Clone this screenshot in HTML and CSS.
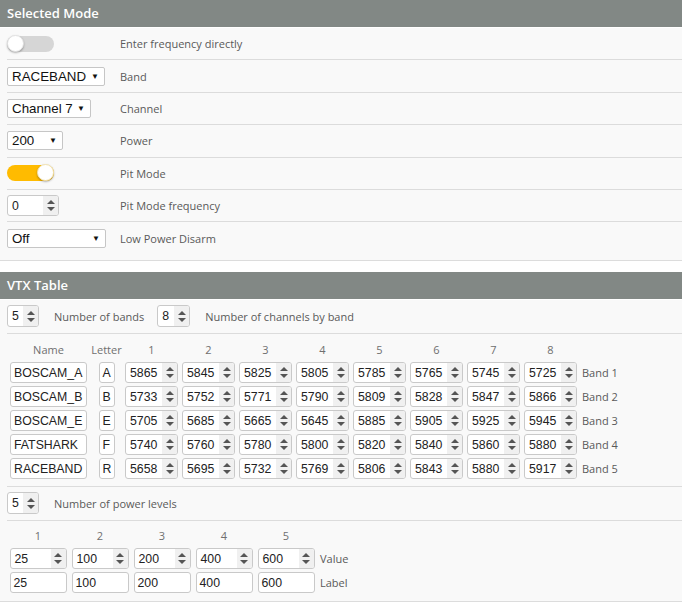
FILE: index.html
```html
<!DOCTYPE html>
<html>
<head>
<meta charset="utf-8">
<link rel="stylesheet" href="styles.css">
</head>
<body>
<div class="box">
  <div class="title">Selected Mode</div>
  <div class="content">
    <div class="row">
      <div class="ctl"><span class="switch"><span class="knob"></span></span></div>
      <span class="lbl">Enter frequency directly</span>
    </div>
    <div class="row">
      <div class="ctl"><span class="sel w98"><span>RACEBAND</span><span class="arr">▼</span></span></div>
      <span class="lbl">Band</span>
    </div>
    <div class="row">
      <div class="ctl"><span class="sel w84"><span>Channel 7</span><span class="arr">▼</span></span></div>
      <span class="lbl">Channel</span>
    </div>
    <div class="row">
      <div class="ctl"><span class="sel w56"><span>200</span><span class="arr">▼</span></span></div>
      <span class="lbl">Power</span>
    </div>
    <div class="row">
      <div class="ctl"><span class="switch on"><span class="knob"></span></span></div>
      <span class="lbl">Pit Mode</span>
    </div>
    <div class="row">
      <div class="ctl"><span class="num w52"><span class="v">0</span><span class="sp"><i class="up"></i><i class="dn"></i></span></span></div>
      <span class="lbl">Pit Mode frequency</span>
    </div>
    <div class="row last">
      <div class="ctl"><span class="sel w99"><span>Off</span><span class="arr">▼</span></span></div>
      <span class="lbl">Low Power Disarm</span>
    </div>
  </div>
</div>

<div class="box second">
  <div class="title">VTX Table</div>
  <div class="content">
    <div class="line">
      <span class="num w32"><span class="v">5</span><span class="sp"><i class="up"></i><i class="dn"></i></span></span>
      <span class="lbl tight">Number of bands</span>
      <span class="num w33"><span class="v">8</span><span class="sp"><i class="up"></i><i class="dn"></i></span></span>
      <span class="lbl">Number of channels by band</span>
    </div>
    <div class="vtx">
      <span class="hd">Name</span><span class="hd">Letter</span>
      <span class="hd">1</span><span class="hd">2</span><span class="hd">3</span><span class="hd">4</span><span class="hd">5</span><span class="hd">6</span><span class="hd">7</span><span class="hd">8</span><span></span>

      <span class="txt wname">BOSCAM_A</span><span class="txt wlet">A</span>
      <span class="num wf"><span class="v">5865</span><span class="sp"><i class="up"></i><i class="dn"></i></span></span>
      <span class="num wf"><span class="v">5845</span><span class="sp"><i class="up"></i><i class="dn"></i></span></span>
      <span class="num wf"><span class="v">5825</span><span class="sp"><i class="up"></i><i class="dn"></i></span></span>
      <span class="num wf"><span class="v">5805</span><span class="sp"><i class="up"></i><i class="dn"></i></span></span>
      <span class="num wf"><span class="v">5785</span><span class="sp"><i class="up"></i><i class="dn"></i></span></span>
      <span class="num wf"><span class="v">5765</span><span class="sp"><i class="up"></i><i class="dn"></i></span></span>
      <span class="num wf"><span class="v">5745</span><span class="sp"><i class="up"></i><i class="dn"></i></span></span>
      <span class="num wf"><span class="v">5725</span><span class="sp"><i class="up"></i><i class="dn"></i></span></span>
      <span class="band">Band 1</span>

      <span class="txt wname">BOSCAM_B</span><span class="txt wlet">B</span>
      <span class="num wf"><span class="v">5733</span><span class="sp"><i class="up"></i><i class="dn"></i></span></span>
      <span class="num wf"><span class="v">5752</span><span class="sp"><i class="up"></i><i class="dn"></i></span></span>
      <span class="num wf"><span class="v">5771</span><span class="sp"><i class="up"></i><i class="dn"></i></span></span>
      <span class="num wf"><span class="v">5790</span><span class="sp"><i class="up"></i><i class="dn"></i></span></span>
      <span class="num wf"><span class="v">5809</span><span class="sp"><i class="up"></i><i class="dn"></i></span></span>
      <span class="num wf"><span class="v">5828</span><span class="sp"><i class="up"></i><i class="dn"></i></span></span>
      <span class="num wf"><span class="v">5847</span><span class="sp"><i class="up"></i><i class="dn"></i></span></span>
      <span class="num wf"><span class="v">5866</span><span class="sp"><i class="up"></i><i class="dn"></i></span></span>
      <span class="band">Band 2</span>

      <span class="txt wname">BOSCAM_E</span><span class="txt wlet">E</span>
      <span class="num wf"><span class="v">5705</span><span class="sp"><i class="up"></i><i class="dn"></i></span></span>
      <span class="num wf"><span class="v">5685</span><span class="sp"><i class="up"></i><i class="dn"></i></span></span>
      <span class="num wf"><span class="v">5665</span><span class="sp"><i class="up"></i><i class="dn"></i></span></span>
      <span class="num wf"><span class="v">5645</span><span class="sp"><i class="up"></i><i class="dn"></i></span></span>
      <span class="num wf"><span class="v">5885</span><span class="sp"><i class="up"></i><i class="dn"></i></span></span>
      <span class="num wf"><span class="v">5905</span><span class="sp"><i class="up"></i><i class="dn"></i></span></span>
      <span class="num wf"><span class="v">5925</span><span class="sp"><i class="up"></i><i class="dn"></i></span></span>
      <span class="num wf"><span class="v">5945</span><span class="sp"><i class="up"></i><i class="dn"></i></span></span>
      <span class="band">Band 3</span>

      <span class="txt wname">FATSHARK</span><span class="txt wlet">F</span>
      <span class="num wf"><span class="v">5740</span><span class="sp"><i class="up"></i><i class="dn"></i></span></span>
      <span class="num wf"><span class="v">5760</span><span class="sp"><i class="up"></i><i class="dn"></i></span></span>
      <span class="num wf"><span class="v">5780</span><span class="sp"><i class="up"></i><i class="dn"></i></span></span>
      <span class="num wf"><span class="v">5800</span><span class="sp"><i class="up"></i><i class="dn"></i></span></span>
      <span class="num wf"><span class="v">5820</span><span class="sp"><i class="up"></i><i class="dn"></i></span></span>
      <span class="num wf"><span class="v">5840</span><span class="sp"><i class="up"></i><i class="dn"></i></span></span>
      <span class="num wf"><span class="v">5860</span><span class="sp"><i class="up"></i><i class="dn"></i></span></span>
      <span class="num wf"><span class="v">5880</span><span class="sp"><i class="up"></i><i class="dn"></i></span></span>
      <span class="band">Band 4</span>

      <span class="txt wname">RACEBAND</span><span class="txt wlet">R</span>
      <span class="num wf"><span class="v">5658</span><span class="sp"><i class="up"></i><i class="dn"></i></span></span>
      <span class="num wf"><span class="v">5695</span><span class="sp"><i class="up"></i><i class="dn"></i></span></span>
      <span class="num wf"><span class="v">5732</span><span class="sp"><i class="up"></i><i class="dn"></i></span></span>
      <span class="num wf"><span class="v">5769</span><span class="sp"><i class="up"></i><i class="dn"></i></span></span>
      <span class="num wf"><span class="v">5806</span><span class="sp"><i class="up"></i><i class="dn"></i></span></span>
      <span class="num wf"><span class="v">5843</span><span class="sp"><i class="up"></i><i class="dn"></i></span></span>
      <span class="num wf"><span class="v">5880</span><span class="sp"><i class="up"></i><i class="dn"></i></span></span>
      <span class="num wf"><span class="v">5917</span><span class="sp"><i class="up"></i><i class="dn"></i></span></span>
      <span class="band">Band 5</span>
    </div>
    <div class="line">
      <span class="num w32"><span class="v">5</span><span class="sp"><i class="up"></i><i class="dn"></i></span></span>
      <span class="lbl">Number of power levels</span>
    </div>
    <div class="pwr">
      <span class="hd">1</span><span class="hd">2</span><span class="hd">3</span><span class="hd">4</span><span class="hd">5</span><span></span>

      <span class="num wp"><span class="v">25</span><span class="sp"><i class="up"></i><i class="dn"></i></span></span>
      <span class="num wp"><span class="v">100</span><span class="sp"><i class="up"></i><i class="dn"></i></span></span>
      <span class="num wp"><span class="v">200</span><span class="sp"><i class="up"></i><i class="dn"></i></span></span>
      <span class="num wp"><span class="v">400</span><span class="sp"><i class="up"></i><i class="dn"></i></span></span>
      <span class="num wp"><span class="v">600</span><span class="sp"><i class="up"></i><i class="dn"></i></span></span>
      <span class="band">Value</span>

      <span class="txt wp">25</span>
      <span class="txt wp">100</span>
      <span class="txt wp">200</span>
      <span class="txt wp">400</span>
      <span class="txt wp">600</span>
      <span class="band">Label</span>
    </div>
  </div>
</div>
</body>
</html>
```

FILE: styles.css
```css
html, body {
  margin: 0;
  padding: 0;
  background: #ffffff;
  font-family: "Open Sans", "DejaVu Sans", sans-serif;
  width: 682px;
  overflow: hidden;
}

.box {
  background: #f9f9f9;
  border-bottom: 1px solid #dcdcdc;
}

.box.second {
  margin-top: 11px;
}

.title {
  background: #828885;
  color: #ffffff;
  height: 27px;
  line-height: 27px;
  padding-left: 7px;
  font-size: 13px;
  font-weight: 600;
  border-bottom: 1px solid #ffffff;
}

.content {
  padding-left: 7px;
}

.row {
  display: flex;
  align-items: center;
  height: 31.4px;
  border-bottom: 1px solid #dcdcdc;
}

.row.last {
  border-bottom: none;
  height: 31.4px;
  padding-bottom: 6px;
}

.ctl {
  width: 113px;
  display: flex;
  align-items: center;
}

.lbl {
  font-size: 11px;
  color: #5a5a5a;
}

.lbl.tight {
  margin-right: -2px;
}

/* toggle switch */
.switch {
  position: relative;
  display: inline-block;
  width: 47px;
  height: 16px;
  border-radius: 9px;
  background: #d6d6d6;
}

.switch .knob {
  position: absolute;
  left: 0;
  top: -1px;
  box-sizing: border-box;
  width: 17px;
  height: 17px;
  border-radius: 50%;
  background: #ffffff;
  border: 1px solid #e2e2e2;
  box-shadow: 0 1px 2px rgba(0, 0, 0, 0.3);
}

.switch.on {
  background: #ffbb00;
}

.switch.on .knob {
  left: 30px;
  border-color: #f3e3b0;
}

/* select */
.sel {
  display: inline-flex;
  align-items: center;
  justify-content: space-between;
  box-sizing: border-box;
  height: 19px;
  border: 1px solid #c6c6c6;
  border-radius: 2px;
  background: #ffffff;
  padding: 0 5px 0 4px;
  font-family: "Liberation Sans", Arial, sans-serif;
  font-size: 13.333px;
  color: #111111;
}

.sel .arr {
  font-size: 8px;
  color: #111111;
}

.w98 { width: 98px; }
.w84 { width: 84px; }
.w56 { width: 56px; }
.w99 { width: 99px; }
.w52 { width: 52px; }
.w32 { width: 32px; }
.w33 { width: 33px; }
.wf { width: 53px; }
.wp { width: 57px; }
.wname { width: 77px; }
.wlet { width: 16px; }

/* number input */
.num {
  display: inline-flex;
  box-sizing: border-box;
  height: 21px;
  border: 1px solid #c9c9c9;
  border-radius: 3px;
  background: #ffffff;
  font-family: "Liberation Sans", Arial, sans-serif;
  font-size: 12.3px;
  color: #222222;
  overflow: hidden;
}

.num .v {
  flex: 1;
  display: flex;
  align-items: center;
  padding-left: 4px;
}

.num .sp {
  width: 15px;
  background: #f0f0f0;
  display: flex;
  flex-direction: column;
  align-items: center;
  justify-content: center;
  gap: 3px;
}

.up, .dn {
  display: block;
  width: 0;
  height: 0;
  border-left: 4px solid transparent;
  border-right: 4px solid transparent;
}

.up { border-bottom: 4px solid #555555; }
.dn { border-top: 4px solid #555555; }

/* text input */
.txt {
  display: inline-flex;
  align-items: center;
  box-sizing: border-box;
  height: 21px;
  border: 1px solid #c9c9c9;
  border-radius: 3px;
  background: #ffffff;
  font-family: "Liberation Sans", Arial, sans-serif;
  font-size: 12.3px;
  color: #222222;
  padding-left: 3px;
  overflow: hidden;
  white-space: nowrap;
}

.line {
  display: flex;
  align-items: center;
  gap: 15px;
  height: 33px;
  border-bottom: 1px solid #dcdcdc;
}

.line .num {
  height: 22px;
}

.hd {
  font-size: 11px;
  color: #6f6f6f;
}

.vtx {
  display: grid;
  grid-template-columns: 83px 33px repeat(8, 57px) auto;
  grid-template-rows: 22px repeat(5, 24px);
  align-items: center;
  justify-items: center;
  padding: 5px 0 5px 0;
  border-bottom: 1px solid #dcdcdc;
}

.band {
  justify-self: start;
  padding-left: 3px;
  font-size: 11px;
  color: #5a5a5a;
}

.pwr {
  display: grid;
  grid-template-columns: repeat(5, 62px) auto;
  grid-template-rows: 22px repeat(2, 24px);
  align-items: center;
  justify-items: center;
  padding: 4px 0 6px 0;
}
```
